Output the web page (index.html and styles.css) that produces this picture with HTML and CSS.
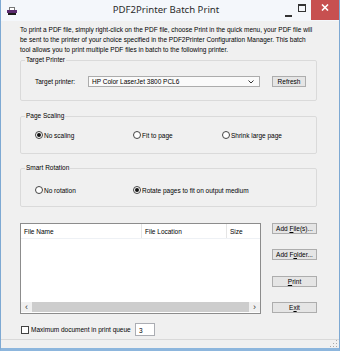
FILE: index.html
```html
<!DOCTYPE html>
<html lang="en">
<head>
    <meta charset="utf-8">
    <title>PDF2Printer Batch Print</title>
    <link rel="stylesheet" href="styles.css">
</head>

<body>
    <div class="window">
        <div class="titlebar">
            <svg class="appicon" width="10" height="8" viewBox="0 0 10 8">
                <rect x="2.5" y="0.5" width="5" height="3" fill="#fff" stroke="#777" stroke-width="1"/>
                <rect x="0" y="3" width="10" height="3" fill="#5a2a6e"/>
                <rect x="1" y="6" width="8" height="2" fill="#1a1a1a"/>
            </svg>
            <div class="title">PDF2Printer Batch Print</div>
            <div class="controls">
                <span class="ctl min"><svg width="7" height="7" viewBox="0 0 7 7"><rect x="0" y="5" width="7" height="2" fill="#333"/></svg></span>
                <span class="ctl max"><svg width="8" height="8" viewBox="0 0 8 8"><rect x="0.5" y="0.5" width="7" height="7" fill="none" stroke="#333"/><rect x="0" y="0" width="8" height="2" fill="#333"/></svg></span>
                <span class="ctl close"><svg width="8" height="7" viewBox="0 0 8 7"><path d="M1 0.5 L7 6.5 M7 0.5 L1 6.5" stroke="#fff" stroke-width="1.6"/></svg></span>
            </div>
        </div>

        <div class="client">
            <p class="intro">To print a PDF file, simply right-click on the PDF file, choose Print in the quick menu, your PDF file will be sent to the printer of your choice specified in the PDF2Printer Configuration Manager. This batch tool allows you to print multiple PDF files in batch to the following printer.</p>

            <fieldset class="group printer">
                <legend>Target Printer</legend>
                <div class="printer-row">
                    <span class="printer-label">Target printer:</span>
                    <div class="combo">
                        <span>HP Color LaserJet 3800 PCL6</span>
                        <svg width="6" height="4" viewBox="0 0 6 4"><path d="M0.5 0.5 L3 3 L5.5 0.5" fill="none" stroke="#333" stroke-width="1"/></svg>
                    </div>
                    <button class="btn refresh">Refresh</button>
                </div>
            </fieldset>

            <fieldset class="group scaling">
                <legend>Page Scaling</legend>
                <div class="radio-row three">
                    <label class="radio"><span class="dot on"></span>No scaling</label>
                    <label class="radio"><span class="dot"></span>Fit to page</label>
                    <label class="radio"><span class="dot"></span>Shrink large page</label>
                </div>
            </fieldset>

            <fieldset class="group rotation">
                <legend>Smart Rotation</legend>
                <div class="radio-row">
                    <label class="radio"><span class="dot"></span>No rotation</label>
                    <label class="radio"><span class="dot on"></span>Rotate pages to fit on output medium</label>
                </div>
            </fieldset>

            <div class="files">
                <div class="list">
                    <div class="list-head">
                        <span class="col name">File Name</span>
                        <span class="col loc">File Location</span>
                        <span class="col size">Size</span>
                    </div>
                    <div class="list-body"></div>
                    <div class="hscroll">
                        <span class="arrow">&lsaquo;</span>
                        <span class="thumb"></span>
                        <span class="arrow">&rsaquo;</span>
                    </div>
                </div>
                <div class="side">
                    <button class="btn">Add <u>F</u>ile(s)...</button>
                    <button class="btn">Add F<u>o</u>lder...</button>
                    <button class="btn"><u>P</u>rint</button>
                    <button class="btn">E<u>x</u>it</button>
                </div>
            </div>

            <div class="queue">
                <span class="check"></span>
                <span class="queue-label">Maximum document in print queue</span>
                <span class="num">3</span>
            </div>
        </div>

        <div class="statusbar">
            <svg class="grip" width="8" height="8" viewBox="0 0 8 8">
                <rect x="6" y="0" width="1" height="1" fill="#aaa"/>
                <rect x="3" y="3" width="1" height="1" fill="#aaa"/>
                <rect x="6" y="3" width="1" height="1" fill="#aaa"/>
                <rect x="0" y="6" width="1" height="1" fill="#aaa"/>
                <rect x="3" y="6" width="1" height="1" fill="#aaa"/>
                <rect x="6" y="6" width="1" height="1" fill="#aaa"/>
            </svg>
        </div>
    </div>
</body>
</html>
```

FILE: styles.css
```css
* {
    box-sizing: border-box;
}

body {
    margin: 0;
    font-family: 'Liberation Sans', Arial, sans-serif;
    font-size: 6.5px;
    color: #000;
}

.window {
    width: 340px;
    height: 351px;
    display: flex;
    flex-direction: column;
    background-color: #f0f0f0;
    border-left: 1px solid #7ea9d3;
    border-right: 1px solid #7ea9d3;
    border-bottom: 3px solid #8db6dd;
}

/* title bar */
.titlebar {
    height: 21px;
    display: flex;
    align-items: flex-start;
    background-color: #f4f7fb;
}

.appicon {
    margin: 7px 0 0 6px;
}

.title {
    flex: 1;
    text-align: center;
    font-family: 'Noto Sans', sans-serif;
    font-size: 9.6px;
    line-height: 20px;
    color: #2b2b2b;
    padding-left: 34px;
}

.controls {
    display: flex;
}

.ctl {
    display: flex;
    justify-content: center;
    width: 14px;
    height: 20px;
}

.min svg {
    margin-top: 10px;
}

.max svg {
    margin-top: 4px;
}

.close {
    width: 28px;
    margin-left: 2px;
    background-color: #c75050;
}

.close svg {
    margin-top: 4px;
}

/* client area */
.client {
    flex: 1;
    padding: 4px 22px 0 19px;
}

.intro {
    margin: 0;
    line-height: 10px;
}

.group {
    margin: 0;
    padding: 0;
    border: 1px solid #dadada;
    border-radius: 2px;
    min-width: 0;
}

.group legend {
    margin-left: 4px;
    padding: 0 1px;
    line-height: 10px;
}

.scaling {
    margin-top: 10px;
}

.rotation {
    margin-top: 9px;
}

.printer-row {
    display: flex;
    align-items: center;
    height: 11px;
    margin: 11px 0 13px;
    padding-left: 14px;
}

.printer-label {
    width: 53px;
}

.combo {
    width: 172px;
    height: 11px;
    display: flex;
    align-items: center;
    justify-content: space-between;
    padding: 0 5px 0 3px;
    border: 1px solid #acacac;
    background-color: #fafafa;
}

.btn {
    font: inherit;
    color: #000;
    height: 11px;
    padding: 0;
    border: 1px solid #adadad;
    background-color: #e5e5e5;
    line-height: 9px;
    white-space: nowrap;
}

.btn u {
    text-decoration: underline;
}

.refresh {
    width: 34px;
    margin-left: 12px;
}

.radio-row {
    display: grid;
    grid-template-columns: 98px 1fr;
    height: 10px;
    padding-left: 14px;
}

.three {
    grid-template-columns: 98px 89px 1fr;
}

.scaling .radio-row {
    margin: 9px 0 13px;
}

.rotation .radio-row {
    margin: 12px 0 11px;
}

.radio {
    display: flex;
    align-items: center;
    gap: 1px;
}

.dot {
    width: 8px;
    height: 8px;
    border: 1px solid #444;
    border-radius: 50%;
    background-color: #fff;
    display: flex;
    align-items: center;
    justify-content: center;
}

.dot.on::after {
    content: "";
    width: 4px;
    height: 4px;
    border-radius: 50%;
    background-color: #111;
}

/* file list */
.files {
    display: flex;
    margin-top: 16px;
    height: 91px;
}

.list {
    width: 241px;
    display: flex;
    flex-direction: column;
    border: 1px solid #8c8c8c;
    background-color: #fff;
}

.list-head {
    display: flex;
    height: 15px;
    align-items: center;
    border-bottom: 1px solid #eef1f5;
}

.col {
    height: 100%;
    display: flex;
    align-items: center;
    padding-left: 3px;
    border-right: 1px solid #e5e5e5;
}

.name {
    width: 121px;
}

.loc {
    width: 85px;
}

.size {
    flex: 1;
    border-right: none;
}

.list-body {
    flex: 1;
}

.hscroll {
    height: 10px;
    display: flex;
    align-items: center;
    margin-bottom: 1px;
    background-color: #f0f0f0;
}

.arrow {
    width: 11px;
    text-align: center;
    font-size: 9px;
    line-height: 10px;
    color: #333;
}

.thumb {
    flex: 1;
    height: 10px;
    background-color: #cdcdcd;
}

.side {
    width: 45px;
    margin-left: 11px;
    display: flex;
    flex-direction: column;
    justify-content: space-between;
    padding-bottom: 1px;
}

.side .btn {
    width: 45px;
}

/* bottom row */
.queue {
    display: flex;
    align-items: center;
    height: 13px;
    margin-top: 9px;
}

.check {
    width: 8px;
    height: 8px;
    margin-left: 1px;
    border: 1px solid #444;
    background-color: #fff;
}

.queue-label {
    margin-left: 2px;
    width: 104px;
    white-space: nowrap;
}

.num {
    width: 20px;
    height: 13px;
    padding: 3px 0 0 3px;
    border: 1px solid #abadb3;
    background-color: #fff;
}

.statusbar {
    height: 9px;
    border-top: 1px solid #d9d9d9;
    display: flex;
    justify-content: flex-end;
    align-items: flex-end;
}

.grip {
    margin: 0 1px 0 0;
}
```
